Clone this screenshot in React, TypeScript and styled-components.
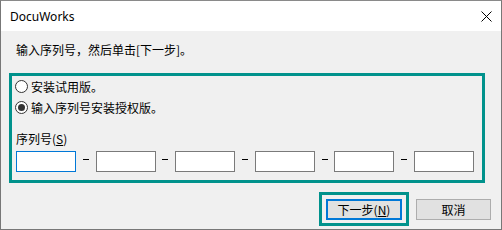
import React from "react";
import styled, { createGlobalStyle } from "styled-components";

const Global = createGlobalStyle`
  html, body { margin: 0; padding: 0; background: #f0f0f0; }
  body { font-family: "Noto Sans CJK SC", "Noto Sans", sans-serif; }
  * { box-sizing: border-box; }
`;

const Window = styled.div`
  width: 502px;
  height: 230px;
  border: 1px solid #777777;
  border-top-color: #8a8a8a;
  display: flex;
  flex-direction: column;
  background: #f0f0f0;
  overflow: hidden;
`;

const TitleBar = styled.div`
  height: 30px;
  background: #ffffff;
  display: flex;
  align-items: center;
  justify-content: space-between;
  padding: 0 9px 0 9px;
`;

const Title = styled.span`
  font-family: "Noto Sans", "Liberation Sans", sans-serif;
  font-size: 12px;
  color: #000;
  line-height: 16px;
  margin-top: 1px;
`;

const CloseBtn = styled.svg`
  width: 11px;
  height: 11px;
  margin-top: 1px;
`;

const Body = styled.div`
  flex: 1;
  display: flex;
  flex-direction: column;
  padding: 11px 10px 0 8px;
`;

const Text = styled.div`
  font-size: 12px;
  line-height: 16px;
  color: #000;
  white-space: nowrap;
`;

const Instruction = styled(Text)`
  margin-left: 7px;
  height: 16px;
`;

const Group = styled.div`
  margin-top: 15px;
  width: 476px;
  height: 110px;
  border: 3px solid #00928c;
  display: flex;
  flex-direction: column;
  padding: 0 0 8px 3px;
`;

const RadioRow = styled.div`
  height: 21px;
  display: flex;
  align-items: center;
  gap: 3px;
`;

const RadioCircle = styled.span<{ $checked?: boolean }>`
  width: 13px;
  height: 13px;
  border-radius: 50%;
  border: 1px solid #333333;
  background: #ffffff;
  display: flex;
  align-items: center;
  justify-content: center;
  flex-shrink: 0;
  &::after {
    content: "";
    width: 7px;
    height: 7px;
    border-radius: 50%;
    background: ${(p) => (p.$checked ? "#333333" : "transparent")};
  }
`;

const FieldLabel = styled(Text)`
  margin: 13px 0 0 1px;
`;

const Inputs = styled.div`
  margin: 4px 0 0 1px;
  width: 458px;
  display: flex;
  align-items: center;
  justify-content: space-between;
`;

const Field = styled.div<{ $focused?: boolean }>`
  width: 60px;
  height: 21px;
  background: #ffffff;
  border: 1px solid ${(p) => (p.$focused ? "#0078d7" : "#7a7a7a")};
`;

const Dash = styled.span`
  width: 6px;
  height: 1px;
  background: #000;
  margin-top: -4px;
`;

const ButtonRow = styled.div`
  margin-top: 9px;
  display: flex;
  justify-content: flex-end;
  align-items: flex-start;
  gap: 7px;
`;

const FocusFrame = styled.div`
  border: 3px solid #00928c;
  padding: 4px 4px 3px 4px;
`;

const Button = styled.div<{ $default?: boolean }>`
  width: ${(p) => (p.$default ? "76px" : "75px")};
  height: 21px;
  margin-top: ${(p) => (p.$default ? "0" : "7px")};
  background: #e1e1e1;
  border: ${(p) => (p.$default ? "2px solid #0078d7" : "1px solid #adadad")};
  display: flex;
  align-items: center;
  justify-content: center;
  font-size: 12px;
  line-height: 16px;
  color: #000;
  u { text-decoration: underline; text-underline-offset: 1px; }
`;

export default function App() {
  return (
    <>
      <Global />
      <Window>
        <TitleBar>
          <Title>DocuWorks</Title>
          <CloseBtn viewBox="0 0 11 11">
            <path d="M0.5 0.5 L10.5 10.5 M10.5 0.5 L0.5 10.5" stroke="#000" strokeWidth="1" fill="none" />
          </CloseBtn>
        </TitleBar>
        <Body>
          <Instruction>输入序列号，然后单击[下一步]。</Instruction>
          <Group>
            <RadioRow>
              <RadioCircle />
              <Text>安装试用版。</Text>
            </RadioRow>
            <RadioRow>
              <RadioCircle $checked />
              <Text>输入序列号安装授权版。</Text>
            </RadioRow>
            <FieldLabel>
              序列号(<u>S</u>)
            </FieldLabel>
            <Inputs>
              <Field $focused />
              <Dash />
              <Field />
              <Dash />
              <Field />
              <Dash />
              <Field />
              <Dash />
              <Field />
              <Dash />
              <Field />
            </Inputs>
          </Group>
          <ButtonRow>
            <FocusFrame>
              <Button $default>
                下一步(<u>N</u>)
              </Button>
            </FocusFrame>
            <Button>取消</Button>
          </ButtonRow>
        </Body>
      </Window>
    </>
  );
}
